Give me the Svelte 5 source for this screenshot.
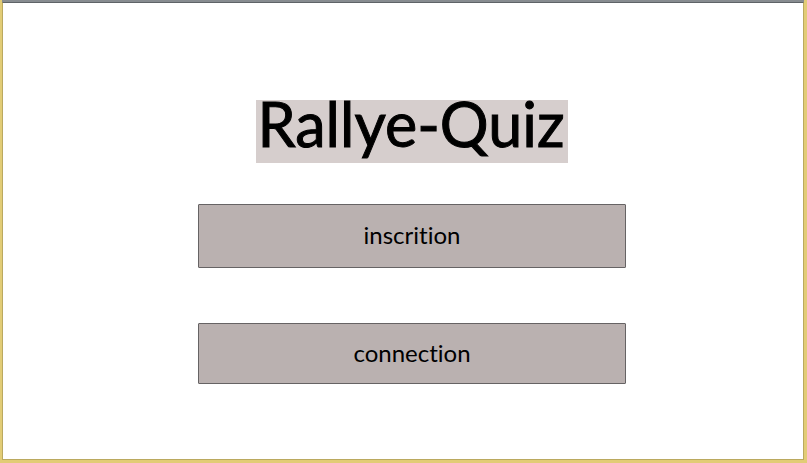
<script>
  const actions = [
    { label: 'inscrition', kind: 'register' },
    { label: 'connection', kind: 'login' }
  ];
</script>

<div class="frame">
  <main>
    <h1>Rallye-Quiz</h1>
    <div class="actions">
      {#each actions as action}
        <button type="button" class={action.kind}>{action.label}</button>
      {/each}
    </div>
  </main>
</div>

<style>
  :global(body) {
    margin: 0;
    background: #e2cc76;
  }

  .frame {
    box-sizing: border-box;
    min-height: 100vh;
    padding: 0 3px 3px 2px;
    display: flex;
    font-family: Lato, "Open Sans", sans-serif;
    font-variant-ligatures: none;
    color: #000;
  }

  main {
    box-sizing: border-box;
    flex: 1;
    display: flex;
    flex-direction: column;
    align-items: center;
    margin-top: 2px;
    padding: 97px 0 40px 18px;
    background: #fff;
    border: 1px solid #bba95f;
    border-top-color: #5e6367;
    box-shadow: 0 -2px #878c90;
  }

  h1 {
    margin: 0;
    padding: 0 4px 16px 2px;
    background: #d6cecd;
    font-size: 61px;
    line-height: 47px;
    font-weight: 400;
    white-space: nowrap;
    -webkit-text-stroke: 1px #000;
    stroke-linejoin: round;
  }

  .actions {
    width: 55%;
    max-width: 428px;
    min-width: 240px;
    margin-top: 41px;
    display: flex;
    flex-direction: column;
    gap: 55px;
  }

  button {
    box-sizing: border-box;
    width: 100%;
    height: 64px;
    padding: 0 0 4px;
    border: 1px solid #666364;
    border-radius: 1px;
    background: #bab1b0;
    color: inherit;
    font-family: inherit;
    font-variant-ligatures: none;
    font-size: 24px;
    font-weight: 400;
    cursor: pointer;
  }

  .login {
    height: 61px;
    padding-bottom: 2px;
  }
</style>
